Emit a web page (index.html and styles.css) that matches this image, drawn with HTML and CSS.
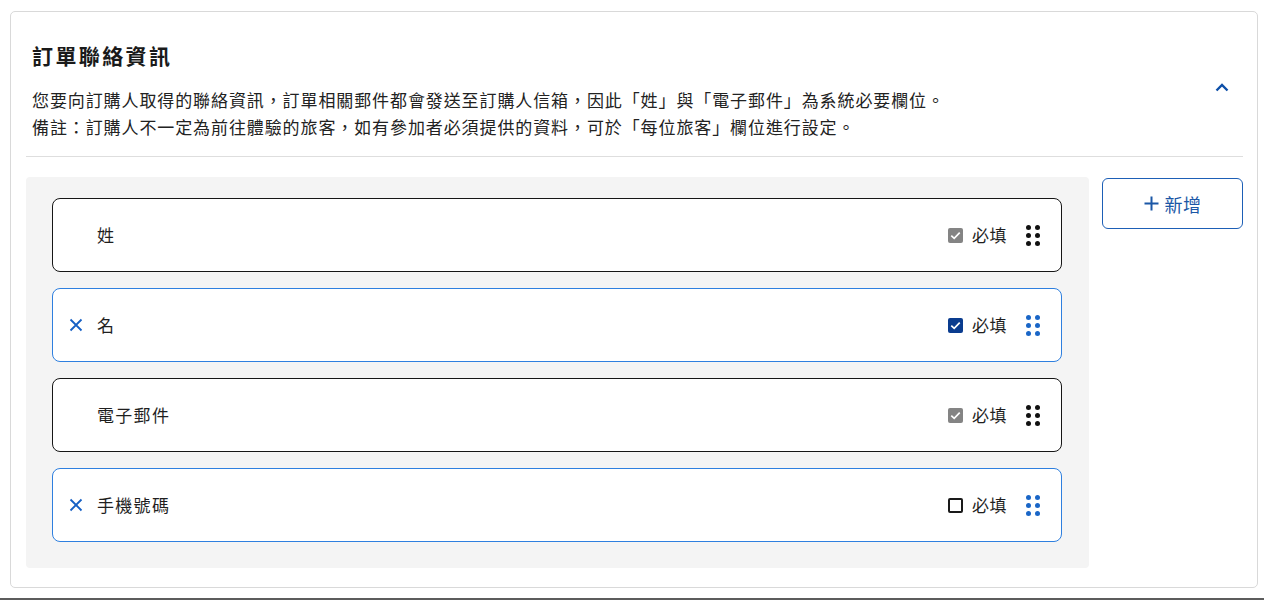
FILE: index.html
```html
<!DOCTYPE html>
<html lang="zh-Hant">
<head>
<meta charset="utf-8">
<title>訂單聯絡資訊</title>
<link rel="stylesheet" href="styles.css">
</head>
<body>
<div class="page">
  <section class="card">
    <header class="card-head">
      <div class="head-text">
        <h2 class="title">訂單聯絡資訊</h2>
        <p class="desc">您要向訂購人取得的聯絡資訊，訂單相關郵件都會發送至訂購人信箱，因此「姓」與「電子郵件」為系統必要欄位。<br>備註：訂購人不一定為前往體驗的旅客，如有參加者必須提供的資料，可於「每位旅客」欄位進行設定。</p>
      </div>
      <button class="collapse" aria-label="收合">
        <svg width="14" height="9" viewBox="0 0 14 9"><path d="M1.5 7.5 L7 2 L12.5 7.5" fill="none" stroke="#0d4fa8" stroke-width="2.4"/></svg>
      </button>
    </header>
    <div class="divider"></div>
    <div class="body">
      <div class="fields">
        <div class="field fixed">
          <span class="remove"></span>
          <span class="name">姓</span>
          <label class="req"><span class="cb cb-locked"><svg viewBox="0 0 16 16"><path d="M3.5 8.2 L6.6 11 L12.5 5" fill="none" stroke="#fff" stroke-width="1.8"/></svg></span>必填</label>
          <span class="drag"><i></i><i></i><i></i><i></i><i></i><i></i></span>
        </div>
        <div class="field edit">
          <span class="remove"><svg width="14" height="14" viewBox="0 0 14 14"><path d="M1.5 1.5 L12.5 12.5 M12.5 1.5 L1.5 12.5" stroke="#1660c4" stroke-width="1.8"/></svg></span>
          <span class="name">名</span>
          <label class="req"><span class="cb cb-on"><svg viewBox="0 0 16 16"><path d="M3.5 8.2 L6.6 11 L12.5 5" fill="none" stroke="#fff" stroke-width="1.8"/></svg></span>必填</label>
          <span class="drag"><i></i><i></i><i></i><i></i><i></i><i></i></span>
        </div>
        <div class="field fixed">
          <span class="remove"></span>
          <span class="name">電子郵件</span>
          <label class="req"><span class="cb cb-locked"><svg viewBox="0 0 16 16"><path d="M3.5 8.2 L6.6 11 L12.5 5" fill="none" stroke="#fff" stroke-width="1.8"/></svg></span>必填</label>
          <span class="drag"><i></i><i></i><i></i><i></i><i></i><i></i></span>
        </div>
        <div class="field edit">
          <span class="remove"><svg width="14" height="14" viewBox="0 0 14 14"><path d="M1.5 1.5 L12.5 12.5 M12.5 1.5 L1.5 12.5" stroke="#1660c4" stroke-width="1.8"/></svg></span>
          <span class="name">手機號碼</span>
          <label class="req"><span class="cb cb-off"></span>必填</label>
          <span class="drag"><i></i><i></i><i></i><i></i><i></i><i></i></span>
        </div>
      </div>
      <button class="add"><svg class="plus" width="15" height="15" viewBox="0 0 15 15"><path d="M7.5 0.5 V14.5 M0.5 7.5 H14.5" stroke="#1b57a6" stroke-width="2"/></svg>新增</button>
    </div>
  </section>
</div>
</body>
</html>
```
FILE: styles.css
```css
* { box-sizing: border-box; }
html, body { margin: 0; padding: 0; background: #fff; }
body {
  font-family: "Noto Sans CJK TC", "Noto Sans", sans-serif;
  color: #1f1f1f;
}
.page {
  height: 600px;
  padding: 11px 6px 0 10px;
  border-bottom: 2px solid #5c5c5c;
}
.card {
  height: 577px;
  border: 1px solid #d9d9d9;
  border-radius: 5px;
  padding: 0 14px 0 15px;
}
.card-head {
  display: flex;
  align-items: flex-start;
  padding: 28px 14px 0 6px;
}
.head-text { flex: 1; }
.title {
  margin: 0;
  font-size: 21px;
  letter-spacing: 2.4px;
  font-weight: 700;
  line-height: 30px;
  color: #1a1a1a;
}
.desc {
  margin: 16px 0 0;
  font-size: 17px;
  letter-spacing: 0.9px;
  line-height: 27px;
  color: #222;
}
.collapse {
  border: 0;
  background: none;
  padding: 0;
  margin-top: 43px;
  width: 14px;
  height: 9px;
  display: flex;
}
.divider {
  height: 1px;
  background: #dedede;
  margin-top: 16px;
}
.body {
  display: flex;
  align-items: flex-start;
  gap: 13px;
  margin-top: 20px;
}
.fields {
  width: 1063px;
  background: #f4f4f4;
  border-radius: 4px;
  padding: 21px 27px 26px 26px;
  display: flex;
  flex-direction: column;
  gap: 16px;
}
.field {
  height: 74px;
  background: #fff;
  border-radius: 8px;
  display: flex;
  align-items: center;
  padding: 0 21px 0 11px;
}
.field.fixed { border: 1px solid #161616; }
.field.edit { border: 1px solid #2e7fdf; }
.remove {
  width: 24px;
  height: 24px;
  display: flex;
  align-items: center;
  justify-content: center;
  margin-right: 9px;
}
.name {
  flex: 1;
  font-size: 17px;
  letter-spacing: 1.3px;
  line-height: 24px;
  color: #1f1f1f;
}
.req {
  display: flex;
  align-items: center;
  font-size: 17px;
  line-height: 24px;
  letter-spacing: 0.5px;
  color: #1f1f1f;
}
.cb {
  width: 15px;
  height: 15px;
  border-radius: 2px;
  margin-right: 9px;
  display: flex;
}
.cb svg { width: 15px; height: 15px; }
.cb-locked { background: #848484; }
.cb-on { background: #0a3c8f; }
.cb-off { border: 2px solid #1a1a1a; }
.drag {
  margin-left: 19px;
  width: 14px;
  display: grid;
  grid-template-columns: 5px 5px;
  grid-auto-rows: 5px;
  column-gap: 4px;
  row-gap: 3px;
}
.drag i {
  display: block;
  width: 5px;
  height: 5px;
  border-radius: 50%;
  background: #111;
}
.edit .drag i { background: #1a66c7; }
.add {
  width: 141px;
  height: 51px;
  margin-top: 1px;
  border: 1px solid #1d5fb6;
  border-radius: 6px;
  background: #fff;
  color: #1b57a6;
  font-family: "Noto Sans CJK TC", "Noto Sans", sans-serif;
  font-size: 18px;
  letter-spacing: 0.5px;
  display: flex;
  align-items: center;
  justify-content: center;
  gap: 6px;
}
.plus { display: block; }
```
